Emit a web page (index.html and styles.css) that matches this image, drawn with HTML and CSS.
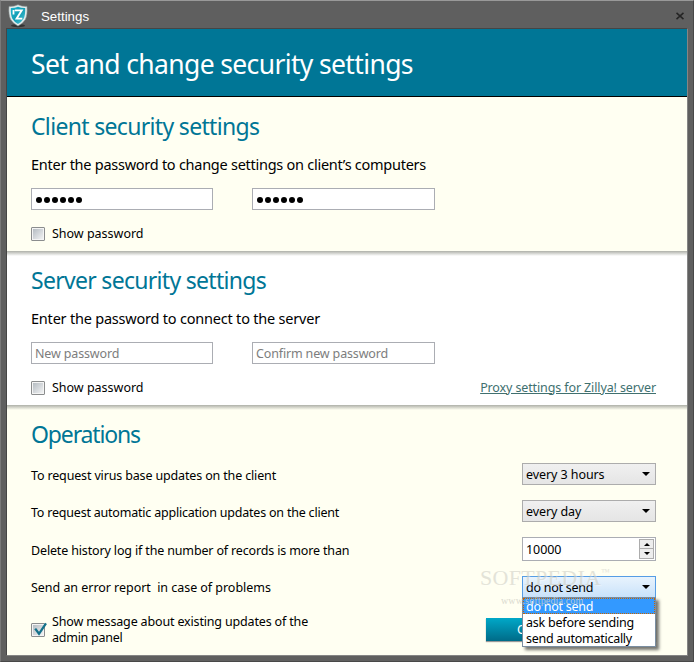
FILE: index.html
```html
<!DOCTYPE html>
<html lang="en">
<head>
<meta charset="utf-8">
<title>Settings</title>
<link rel="stylesheet" href="styles.css">
</head>
<body>
<div class="window">
  <div class="titlebar">
    <svg class="logo" width="20" height="24" viewBox="0 0 20 24">
      <defs><linearGradient id="shield" x1="0" y1="0" x2="1" y2="1"><stop offset="0" stop-color="#1bb4cd"/><stop offset=".5" stop-color="#129db5"/><stop offset="1" stop-color="#56c9d8"/></linearGradient></defs>
      <ellipse cx="10" cy="21.7" rx="7" ry="1.6" fill="#333"/>
      <path d="M1 2.4 Q6 2.8 10 .8 Q14 2.8 19 2.4 Q19.6 11 17.3 15.5 Q15 19.5 10 22 Q5 19.5 2.7 15.5 Q.4 11 1 2.4Z" fill="#e4ecec" stroke="#8e9898" stroke-width=".6"/>
      <path d="M2.8 4.1 Q7 4.2 10 2.7 Q13 4.2 17.2 4.1 Q17.5 11 15.6 14.7 Q13.8 17.8 10 20 Q6.2 17.8 4.4 14.7 Q2.5 11 2.8 4.1Z" fill="url(#shield)"/>
      <path d="M5.5 6v4.5M6.8 6.3h7L8.5 14.7h5.8" fill="none" stroke="#fff" stroke-width="1.8"/>
    </svg>
    <span class="title">Settings</span>
    <svg class="close" width="8" height="8" viewBox="0 0 8 8"><path d="M.5.9 7.5 7.1M7.5.9.5 7.1" stroke="#242424" stroke-width="1.6"/></svg>
  </div>
  <div class="content">
    <header class="banner"><h1>Set and change security settings</h1></header>
    <section class="panel cream">
      <h2 class="h-client">Client security settings</h2>
      <p class="lead lead-client">Enter the password to change settings on client’s computers</p>
      <div class="fields">
        <div class="input dots"><i></i><i></i><i></i><i></i><i></i><i></i></div>
        <div class="input second dots"><i></i><i></i><i></i><i></i><i></i><i></i></div>
      </div>
      <div class="check-row"><span class="box"></span><span class="show">Show password</span></div>
    </section>
    <section class="panel white shaded">
      <h2 class="h-server">Server security settings</h2>
      <p class="lead lead-server">Enter the password to connect to the server</p>
      <div class="fields">
        <div class="input hint"><span class="t-new">New password</span></div>
        <div class="input second hint"><span class="t-confirm">Confirm new password</span></div>
      </div>
      <div class="check-row"><span class="box"></span><span class="show">Show password</span><a class="proxy">Proxy settings for Zillya! server</a></div>
    </section>
    <section class="panel cream shaded operations">
      <h2 class="h-ops">Operations</h2>
      <div class="options">
        <span class="label l1">To request virus base updates on the client</span>
        <div class="select"><span class="v1">every 3 hours</span><b class="arrow"></b></div>
        <span class="label l2">To request automatic application updates on the client</span>
        <div class="select"><span class="v2">every day</span><b class="arrow"></b></div>
        <span class="label l3">Delete history log if the number of records is more than</span>
        <div class="spinner"><span class="v3">10000</span><div class="steps"><div><b class="tri up"></b></div><div><b class="tri"></b></div></div></div>
        <span class="l4">Send an error report&nbsp; in case of problems</span>
        <div class="select open"><span class="v4">do not send</span><b class="arrow"></b>
          <div class="menu">
            <div class="item active"><span class="v4">do not send</span></div>
            <div class="item"><span class="m2">ask before sending</span></div>
            <div class="item"><span class="m3">send automatically</span></div>
          </div>
        </div>
      </div>
      <div class="footer">
        <span class="box"><svg width="16" height="16" viewBox="0 0 16 16"><path d="M3.2 6.6 7 11.8 14 1.4" fill="none" stroke="#14718a" stroke-width="2.3"/></svg></span>
        <p class="message"><span class="f1">Show message about existing updates of the</span><br><span class="f2">admin panel</span></p>
        <div class="button">OK</div>
      </div>
      <div class="watermark"><div class="brand">SOFTPEDIA<sup>™</sup></div><div class="site">www.softpedia.com</div></div>
    </section>
  </div>
</div>
</body>
</html>
```
FILE: styles.css
```css
* { box-sizing: border-box; }
body { margin: 0; font: 12.5px "Noto Sans", sans-serif; color: #000; }
h1, h2, p { margin: 0; font-weight: 400; }
span, a, h1, h2, p { white-space: nowrap; }

.window { width: 694px; height: 662px; background: #5f5f5f; border: 1px solid #797979; border-top-color: #999; border-right: 1px solid #484848; border-bottom-color: #484848; padding: 0 5px; }
.titlebar { height: 27px; display: flex; align-items: center; padding: 0 2px; }
.logo { margin-top: 2px; }
.title { color: #fff; font: 13.3px "Liberation Sans", sans-serif; margin: 4px auto 0 13px; }
.close { margin: 3px 2px 0 0; }
.content { height: 628px; border: 1px solid #858585; border-top-color: #454545; border-left-color: #454545; }

.banner { height: 68px; background: #007696; border-bottom: 1px solid #000; display: flex; align-items: center; padding: 2px 0 0 24px; }
h1 { color: #fff; font-size: 26.5px; letter-spacing: -.64px; }
.panel { height: 154px; padding: 13px 31px 0 24px; }
.cream { background: #fffff2; }
.white { background: #fff; }
.shaded { background-image: linear-gradient(#aeb0a8, #aeb0a800 5px); }
h2 { color: #007696; font-size: 23px; line-height: 32px; }
.h-client { letter-spacing: -.67px; }
.h-server { letter-spacing: -.7px; }
.h-ops { letter-spacing: -1.15px; }
.lead { font-size: 14.5px; line-height: 20px; margin: 12px 0 14px; }
.lead-client { letter-spacing: -.26px; }
.lead-server { letter-spacing: -.21px; }
.fields { display: flex; gap: 39px; }
.input { width: 182px; height: 22px; border: 1px solid #abadb3; background: #fff; display: flex; align-items: center; padding: 0 3px; }
.second { width: 183px; }
.dots { gap: 2px; padding-left: 4px; }
.dots i { width: 6px; height: 6px; border-radius: 50%; background: #000; margin-top: 2px; }
.hint { color: #7d7d7d; }
.t-new, .t-confirm { letter-spacing: -.15px; }
.check-row { height: 20px; margin-top: 14px; display: flex; align-items: center; gap: 7px; }
.show { letter-spacing: -.01px; margin-top: -2px; }
.box { width: 14px; height: 14px; flex: none; border: 1px solid #8b8d8e; border-radius: 1px; background: linear-gradient(135deg, #b5bcc2, #f1f2f3) content-box, #f4f4f4; padding: 1px; }
.box svg { display: block; margin: -3px 0 0 -1px; overflow: visible; }
.proxy { margin: -2px 0 0 auto; color: #40706f; text-decoration: underline; letter-spacing: -.12px; }

.operations { height: 250px; position: relative; }
.options { display: grid; grid-template-columns: 1fr 134px; grid-template-rows: 37px 37px 38px 38px; align-items: center; margin-top: 6px; }
.label { padding-top: 2px; }
.l1, .l3 { letter-spacing: -.15px; }
.l2 { letter-spacing: -.21px; }
.l4 { letter-spacing: -.04px; }
.select { height: 22px; margin-top: -1px; border: 1px solid #acacac; background: linear-gradient(#f0f0f0, #e5e5e5); display: flex; align-items: center; justify-content: space-between; padding: 0 5px 0 3px; position: relative; }
.v1, .v2, .v3 { letter-spacing: -.08px; }
.v4 { letter-spacing: -.25px; }
.m2 { letter-spacing: -.22px; }
.m3 { letter-spacing: -.27px; }
.arrow { border: 4px solid transparent; border-top-color: #000; border-bottom: 0; }
.spinner { height: 24px; border: 1px solid #abadb3; background: #fff; display: flex; align-items: center; justify-content: space-between; padding: 1px 1px 1px 3px; }
.steps { width: 15px; height: 20px; display: grid; grid-template-rows: 1fr 1fr; }
.steps div { border: 1px solid #acacac; background: #ededed; display: flex; align-items: center; justify-content: center; }
.steps div + div { border-top: 0; }
.tri { border: 3px solid transparent; border-top-color: #000; border-bottom: 0; }
.up { transform: rotate(180deg); }
.open { margin-top: 0; border-color: #569de5; background: linear-gradient(#e8f3fd, #c9e2fa); z-index: 2; }
.menu { position: absolute; left: -1px; top: 20px; width: 134px; height: 50px; border: 1px solid #7a8da0; background: #fff; box-shadow: 3px 3px 3px #0008; }
.item { height: 16px; display: flex; align-items: center; padding-left: 3px; }
.active { background: #3399ff; color: #fff; outline: 1px dotted #c86400; outline-offset: -1px; }

.footer { display: flex; }
.footer .box { margin-top: 17px; }
.message { margin: 8px auto 0 7px; line-height: 16px; }
.f1 { letter-spacing: -.16px; }
.f2 { letter-spacing: -.25px; }
.button { width: 170px; height: 23px; margin: 12px 0 0; background: linear-gradient(#00a8c8, #006b88); color: #fff; padding-left: 31px; line-height: 23px; box-shadow: 0 1px 1px #999; }
.watermark { position: absolute; z-index: 3; left: 473px; top: 161px; color: #d2d2c8; }
.brand { font: 22px/24px "Liberation Serif", serif; letter-spacing: .3px; text-shadow: 1px 1px #fff8; opacity: .6; }
.brand sup { font-size: 9px; line-height: 0; vertical-align: 10px; }
.site { font: 10px/12px "Liberation Serif", serif; letter-spacing: .15px; margin: 5px 0 0 21px; opacity: .8; }
```
